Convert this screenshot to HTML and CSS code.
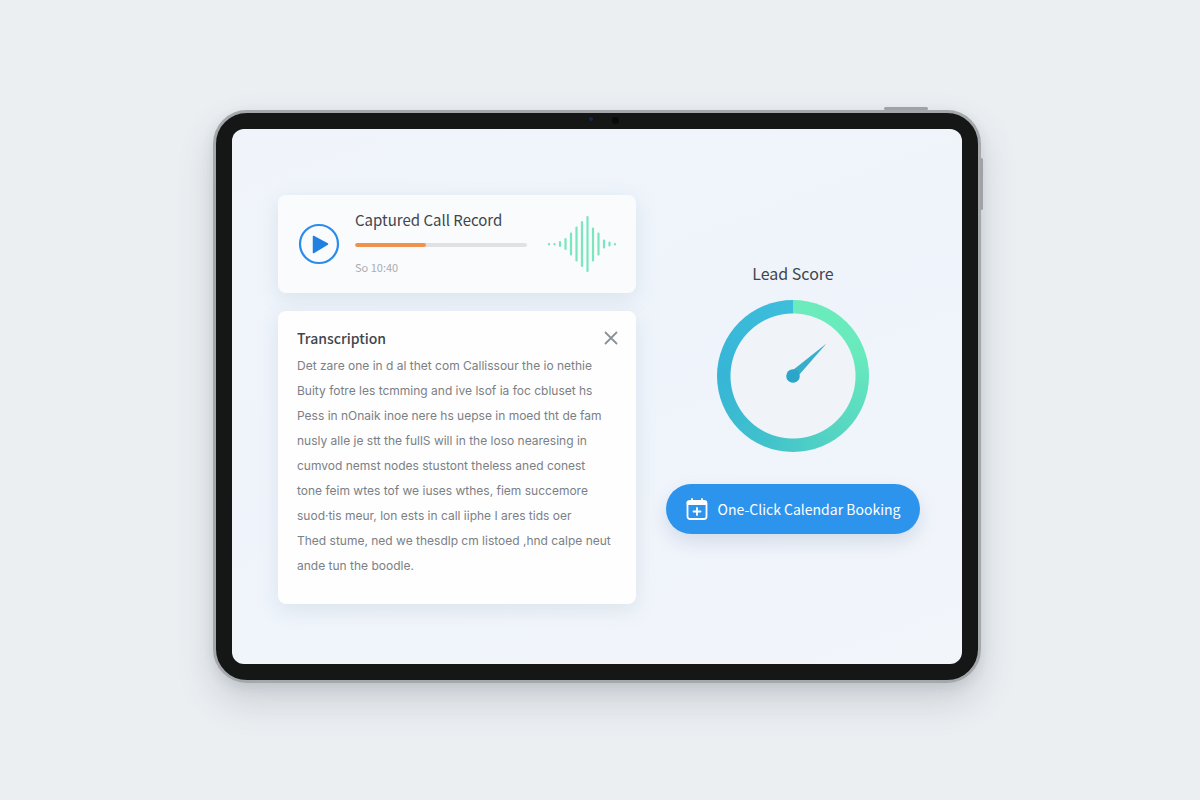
FILE: index.html
```
<!DOCTYPE html>
<html lang="en">
<head>
    <meta charset="UTF-8">
    <title>Captured Call Record</title>
    <link rel="stylesheet" href="styles.css">
</head>
<body>
    <div class="tablet">
        <span class="side-btn top"></span>
        <span class="side-btn right"></span>
        <span class="camera"></span>
        <span class="sensor"></span>
        <main class="screen">
            <div class="call-column">
                <section class="card player">
                    <button class="play-btn" aria-label="Play">
                        <svg width="42" height="42" viewBox="0 0 42 42">
                            <circle cx="21" cy="21" r="19" fill="none" stroke="#2b8ceb" stroke-width="2.2"/>
                            <path d="M15.500 13.500 L29.500 21 L15.500 29.500 Z" fill="#2181e0" stroke="#2181e0" stroke-width="1.500" stroke-linejoin="round"/>
                        </svg>
                    </button>
                    <div class="track">
                        <h1>Captured Call Record</h1>
                        <progress value="41" max="100" aria-label="Playback position"></progress>
                        <span class="time">So 10:40</span>
                    </div>
                    <svg class="wave" width="72" height="58" viewBox="0 0 72 58" fill="none" stroke="#79e6bd" stroke-width="2.2" stroke-linecap="round">
                        <path d="M3 29v.4M8.500 29v.4M14 27v4M19.500 24v10M25 18.500v21M30.500 12.500v33M36 7v44M41.500 2v54M47 13.500v32M52.500 18.500v21M58 25.500v7M63.500 27.500v3M69 29v.4"/>
                    </svg>
                </section>
                <section class="card transcription">
                    <div class="card-head">
                        <h2>Transcription</h2>
                        <button class="close-btn" aria-label="Close">
                            <svg width="14" height="14" viewBox="0 0 14 14" stroke="#8c9196" stroke-width="1.800" stroke-linecap="round">
                                <path d="M1.500 1.500l11 11M12.500 1.500l-11 11"/>
                            </svg>
                        </button>
                    </div>
                    <p>
                        Det zare one in d al thet com Callissour the io nethie<br>
                        Buity fotre les tcmming and ive lsof ia foc cbluset hs<br>
                        Pess in nOnaik inoe nere hs uepse in moed tht de fam<br>
                        nusly alle je stt the fullS will in the loso nearesing in<br>
                        cumvod nemst nodes stustont theless aned conest<br>
                        tone feim wtes tof we iuses wthes, fiem succemore<br>
                        suod·tis meur, lon ests in call iiphe I ares tids oer<br>
                        Thed stume, ned we thesdlp cm listoed ,hnd calpe neut<br>
                        ande tun the boodle.
                    </p>
                </section>
            </div>
            <div class="score-column">
                <h2>Lead Score</h2>
                <div class="gauge">
                    <svg width="152" height="152" viewBox="0 0 152 152">
                        <path d="M109.500 43.500 L82 75 L76 70 Z" fill="#39aecb"/>
                        <circle cx="76" cy="76" r="6.800" fill="#2ba5c8"/>
                    </svg>
                </div>
                <button class="booking-btn">
                    <svg width="22" height="24" viewBox="0 0 22 24" fill="none" stroke="#fff" stroke-width="1.800" stroke-linecap="round">
                        <rect x="1.500" y="4" width="19" height="18" rx="2.500"/>
                        <path d="M1.500 4.500h19v3h-19z" fill="#fff" stroke-width="1"/>
                        <path d="M6 2v2M16 2v2M11 11v7M7.500 14.500h7"/>
                    </svg>
                    One-Click Calendar Booking
                </button>
            </div>
        </main>
    </div>
</body>
</html>
```
FILE: styles.css
```
* {
    box-sizing: border-box;
}
body {
    margin: 0;
    padding: 0 6px 8px 0;
    min-height: 100vh;
    display: flex;
    align-items: center;
    justify-content: center;
    background: #ebeff2;
    font-family: 'Noto Sans CJK SC', 'Noto Sans', sans-serif;
    color: #3f464c;
}
h1, h2, p {
    margin: 0;
}
button {
    border: none;
    background: none;
    padding: 0;
    font-family: inherit;
    cursor: pointer;
}
svg {
    display: block;
}

/* device frame */
.tablet {
    position: relative;
    width: 64vw;
    min-width: 720px;
    padding: 16px;
    background: #151616;
    border: 3px solid #a5a8ab;
    border-radius: 34px;
    box-shadow: 0 18px 36px rgba(70, 80, 95, 0.2), 0 4px 12px rgba(70, 80, 95, 0.12);
}
.side-btn {
    position: absolute;
    background: #a0a2a8;
    border-radius: 2px;
}
.side-btn.top {
    top: -6px;
    right: 50px;
    width: 44px;
    height: 3px;
}
.side-btn.right {
    top: 45px;
    right: -5px;
    width: 3px;
    height: 52px;
}
.camera, .sensor {
    position: absolute;
    top: 4px;
    border-radius: 50%;
}
.camera {
    left: 49%;
    width: 4px;
    height: 4px;
    background: #17284e;
}
.sensor {
    left: 52%;
    width: 7px;
    height: 7px;
    background: #090b0b;
}
.screen {
    display: grid;
    grid-template-columns: 358fr 254fr;
    gap: 30px;
    align-items: center;
    padding: 66px 42px 60px 46px;
    border-radius: 12px;
    background: linear-gradient(160deg, #f0f4fa, #eff4fc 50%, #f2f5fa);
}

/* left side */
.call-column {
    display: flex;
    flex-direction: column;
    gap: 18px;
}
.card {
    border-radius: 8px;
    box-shadow: 0 6px 20px rgba(110, 145, 155, 0.16);
}
.player {
    display: flex;
    align-items: center;
    gap: 15px;
    padding: 12px 18px 12px 20px;
    background: #f9fbfc;
}
.track {
    flex: 1;
    display: flex;
    flex-direction: column;
}
.track h1 {
    font-size: 15px;
    font-weight: 400;
    line-height: 26px;
}
.track progress {
    appearance: none;
    display: block;
    width: 100%;
    height: 4px;
    margin: 10px 0 8px;
    border: none;
    border-radius: 2px;
    background: #dfe1e3;
    overflow: hidden;
}
.track progress::-webkit-progress-bar {
    background: #dfe1e3;
}
.track progress::-webkit-progress-value {
    background: #f0924e;
    border-radius: 2px;
}
.time {
    padding-bottom: 2px;
    font-size: 11px;
    line-height: 24px;
    color: #a9adb1;
}
.wave {
    margin-left: 4px;
}
.transcription {
    padding: 14px 18px 26px 19px;
    background: #fefefe;
}
.card-head {
    display: flex;
    align-items: center;
    justify-content: space-between;
    margin-bottom: 2px;
}
.card-head h2 {
    font-size: 14px;
    font-weight: 500;
    line-height: 26px;
}
.transcription p {
    font-family: Inter, sans-serif;
    font-size: 12px;
    line-height: 25px;
    color: #7b8085;
    white-space: nowrap;
}

/* right side */
.score-column {
    display: flex;
    flex-direction: column;
    align-items: center;
    padding-bottom: 4px;
}
.score-column h2 {
    font-size: 16px;
    font-weight: 400;
    line-height: 24px;
}
.gauge {
    margin: 15px 0 32px;
    border-radius: 50%;
    background:
        radial-gradient(circle, #f0f4f8 62px, transparent 63px),
        conic-gradient(#6cecbc, #68eabd 20%, #55d5c2 40%, #3fc0cc 58%, #37b5d7 75%, #3dbedb);
}
.booking-btn {
    display: flex;
    align-items: center;
    justify-content: center;
    gap: 10px;
    width: 100%;
    height: 50px;
    border-radius: 25px;
    background: #2d94ee;
    color: #fff;
    font-size: 14px;
    box-shadow: 0 8px 18px rgba(80, 110, 150, 0.18);
}
```
